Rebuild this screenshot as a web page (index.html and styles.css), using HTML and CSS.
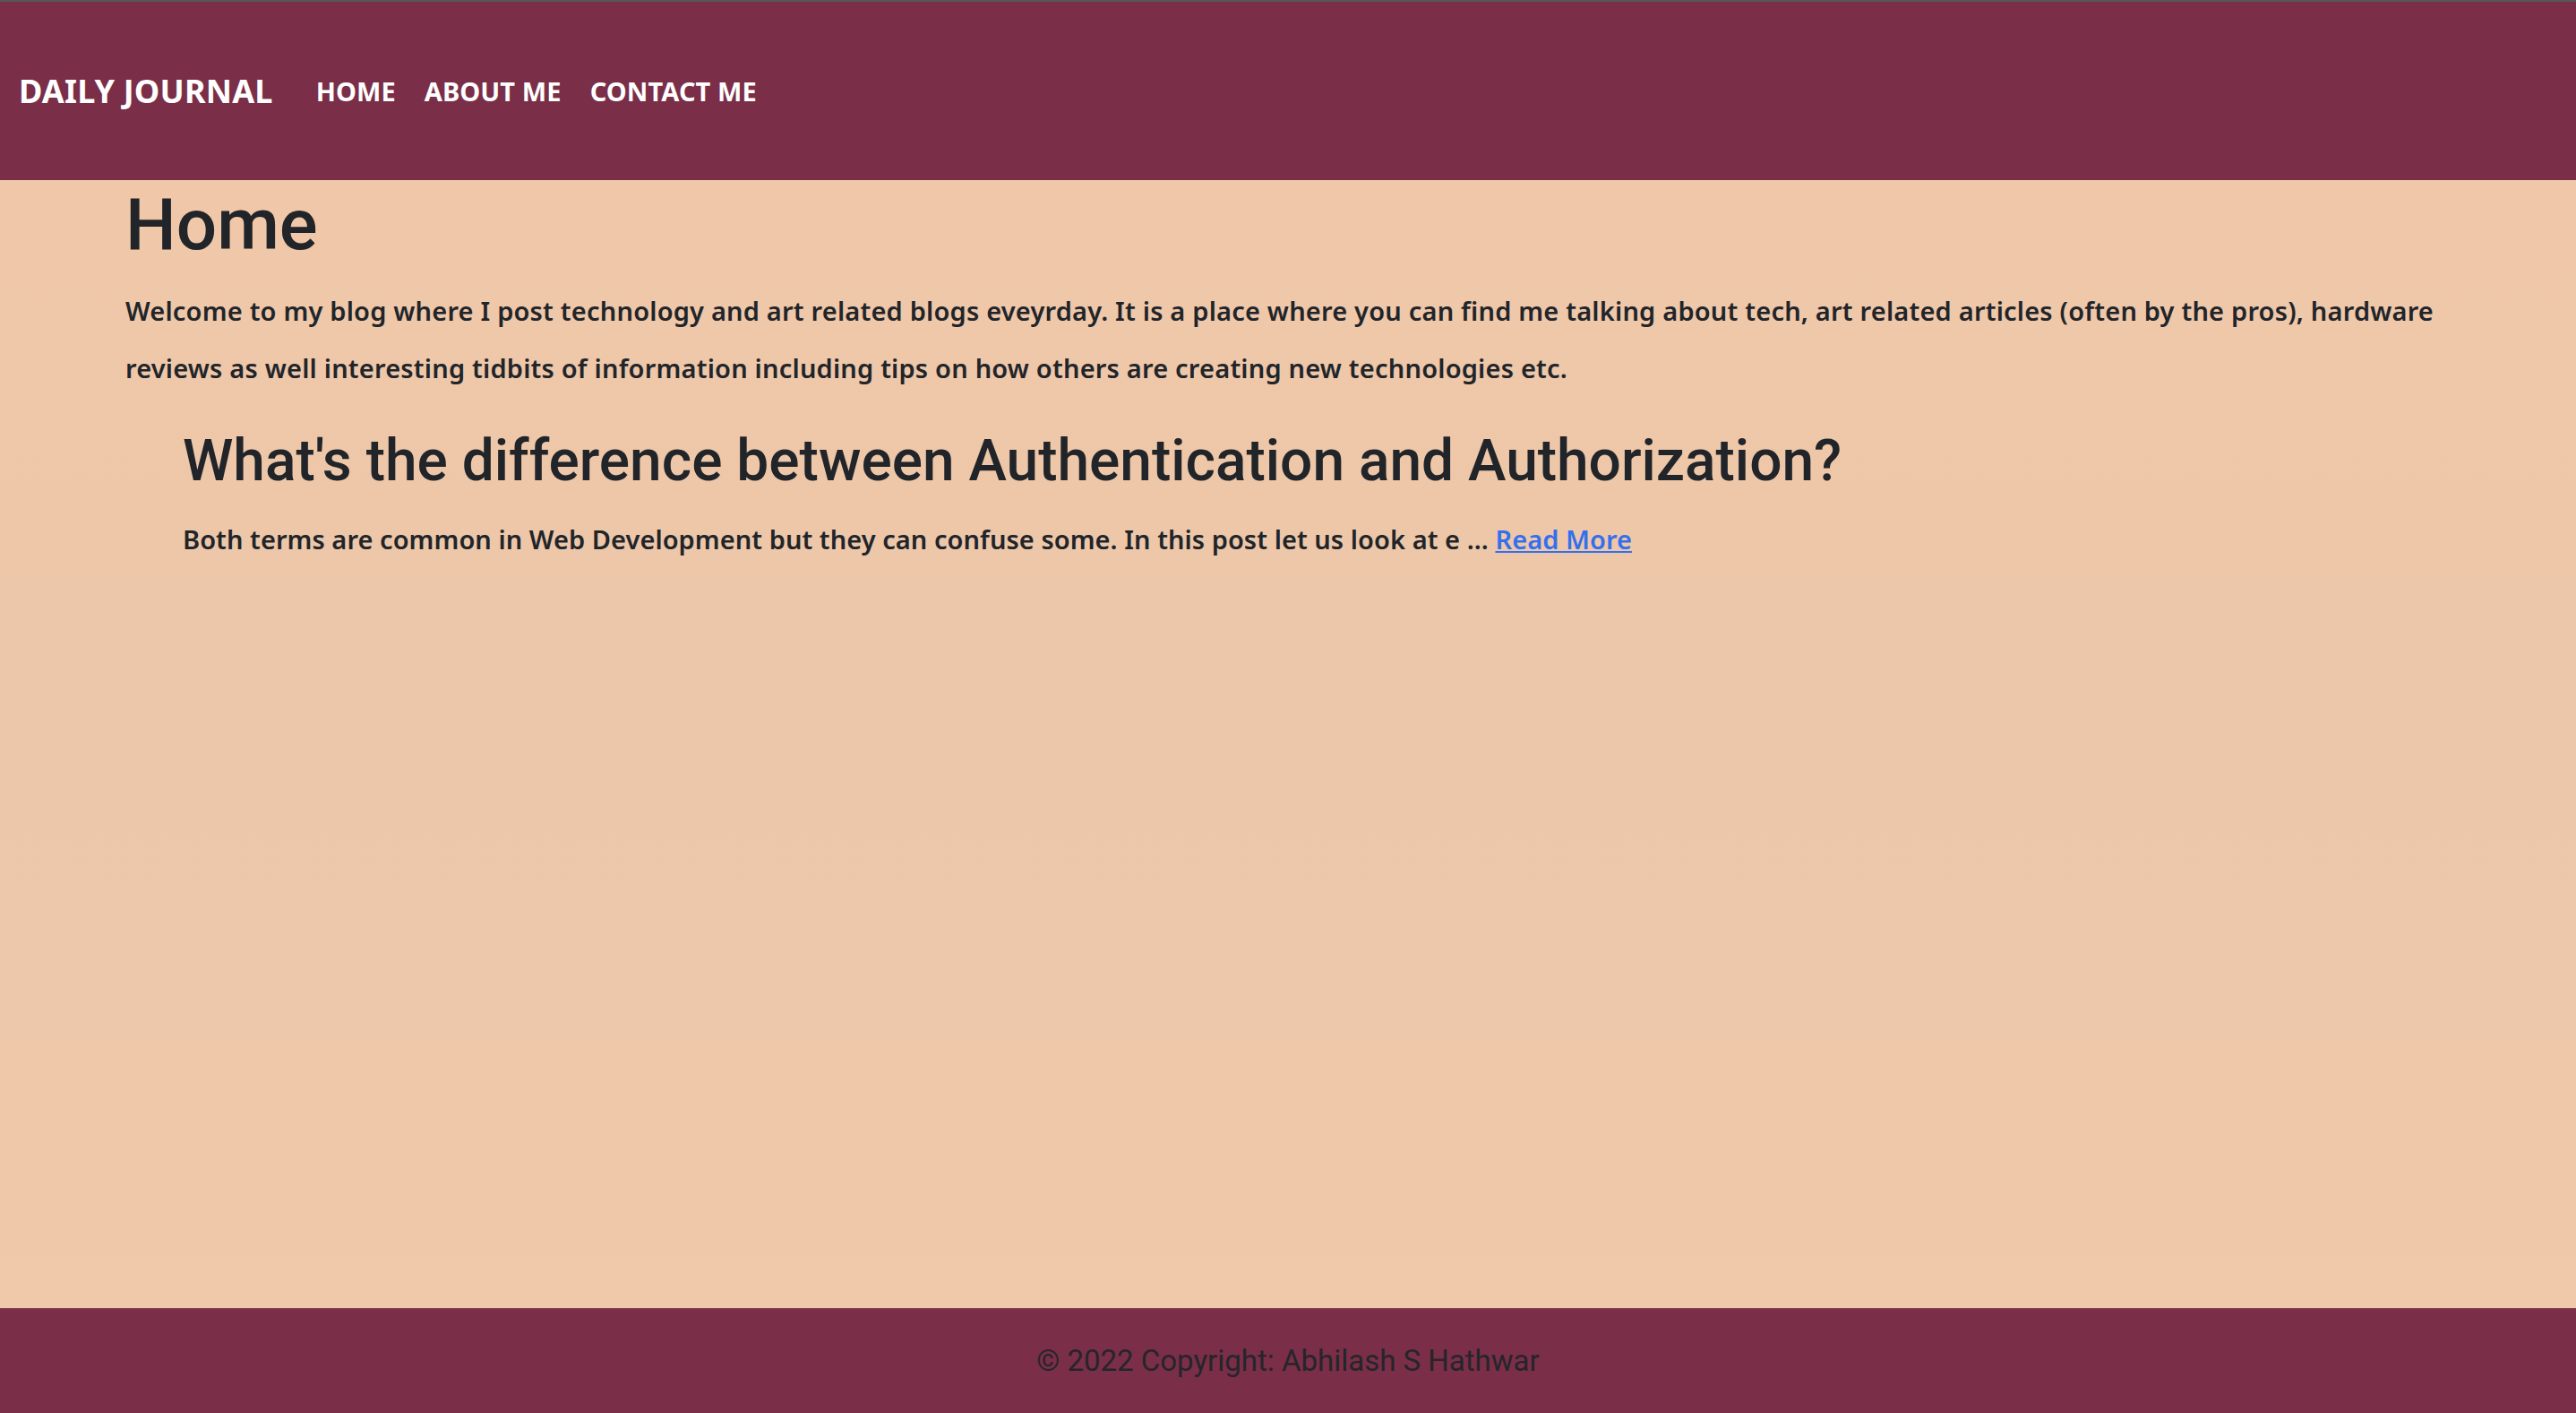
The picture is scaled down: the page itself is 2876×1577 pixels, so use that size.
FILE: index.html
```html
<!DOCTYPE html>
<html lang="en">
<head>
<meta charset="utf-8">
<title>Daily Journal</title>
<link rel="stylesheet" href="styles.css">
</head>
<body>
<header class="navbar">
  <a class="brand" href="#">DAILY JOURNAL</a>
  <nav class="nav">
    <a class="nav-link" href="#">HOME</a>
    <a class="nav-link" href="#">ABOUT ME</a>
    <a class="nav-link" href="#">CONTACT ME</a>
  </nav>
</header>
<main class="content">
  <h1 class="page-title">Home</h1>
  <p class="intro">Welcome to my blog where I post technology and art related blogs eveyrday. It is a place where you can find me talking about tech, art related articles (often by the pros), hardware reviews as well interesting tidbits of information including tips on how others are creating new technologies etc.</p>
  <section class="post">
    <h2 class="post-title">What's the difference between Authentication and Authorization?</h2>
    <p class="post-text">Both terms are common in Web Development but they can confuse some. In this post let us look at e ... <a class="read-more" href="#">Read More</a></p>
  </section>
</main>
<footer class="footer">
  <p class="copyright">© 2022 Copyright: Abhilash S Hathwar</p>
</footer>
</body>
</html>
```

FILE: styles.css
```css
html, body {
  margin: 0;
  padding: 0;
}

body {
  min-height: 100vh;
  display: flex;
  flex-direction: column;
  font-family: "Noto Sans", "DejaVu Sans", sans-serif;
  color: #212529;
  background: #f0c8aa;
}

.navbar {
  height: 199px;
  border-top: 2px solid #57565a;
  background: #7a2e48;
  display: flex;
  align-items: center;
  padding-left: 21px;
}

.brand {
  font-family: "Noto Sans", sans-serif;
  font-weight: 700;
  font-size: 36px;
  letter-spacing: 0.2px;
  color: #ffffff;
  text-decoration: none;
  margin-right: 48px;
}

.nav {
  display: flex;
  gap: 32px;
}

.nav-link {
  font-family: "Noto Sans", sans-serif;
  font-weight: 700;
  font-size: 29px;
  letter-spacing: 0.1px;
  color: #ffffff;
  text-decoration: none;
}

.content {
  flex: 1;
  padding: 2px 140px 0 140px;
  background: linear-gradient(to bottom, #f0c7a9 0%, #ecc7a9 55%, #f0c8aa 100%);
}

.page-title {
  font-family: "Roboto", "Liberation Sans", sans-serif;
  font-weight: 500;
  font-size: 80px;
  line-height: 1.2;
  margin: 0 0 16px 0;
}

.intro {
  font-size: 29px;
  font-weight: 600;
  letter-spacing: 0.2px;
  line-height: 64px;
  margin: 0 0 34px 0;
}

.post {
  padding-left: 64px;
}

.post-title {
  font-family: "Roboto", "Liberation Sans", sans-serif;
  font-weight: 500;
  font-size: 64px;
  line-height: 1.2;
  margin: 0 0 26px 0;
}

.post-text {
  font-size: 29px;
  font-weight: 600;
  letter-spacing: 0.05px;
  line-height: 1.5;
  margin: 0;
}

.read-more {
  color: #3470ee;
  text-decoration: underline;
}

.footer {
  height: 117px;
  background: #7a2e48;
  display: flex;
  align-items: center;
  justify-content: center;
}

.copyright {
  margin: 0;
  font-family: "Roboto", "Liberation Sans", sans-serif;
  font-size: 33px;
  color: #25252a;
}
```
